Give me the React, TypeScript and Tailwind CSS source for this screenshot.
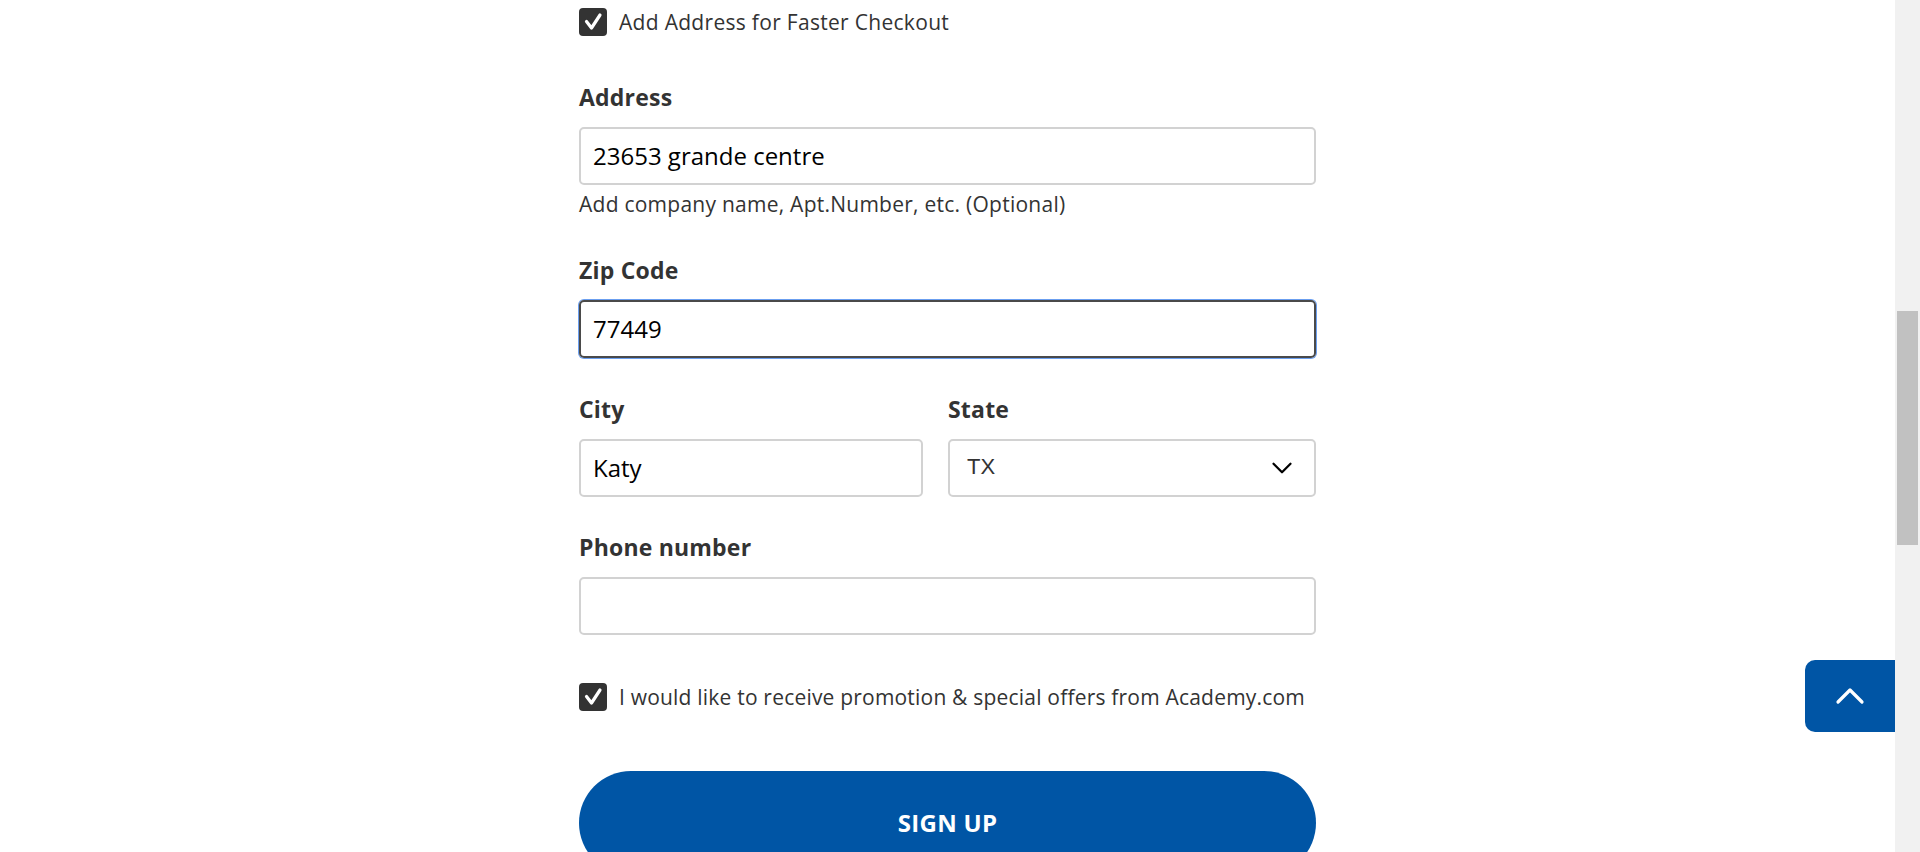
import { ChevronDown, ChevronUp } from "lucide-react";

const font = "font-['Open_Sans',_'Lato',_sans-serif]";

const CheckBox = () => (
  <span className="flex h-[28px] w-[28px] shrink-0 items-center justify-center rounded-[4px] bg-[#333]">
    <svg width="28" height="28" viewBox="0 0 28 28" fill="none">
      <path
        d="M7.5 13.5 L12.5 20 L21 7"
        stroke="white"
        strokeWidth="3.2"
        strokeLinecap="round"
        strokeLinejoin="round"
      />
    </svg>
  </span>
);

const Label = ({ text, className = "" }: { text: string; className?: string }) => (
  <div
    className={`h-[28px] text-[23px] leading-[28px] font-bold tracking-[0.2px] text-[#333] ${className}`}
  >
    {text}
  </div>
);

const TextBox = ({ value, focused = false }: { value?: string; focused?: boolean }) => (
  <div
    className={`mt-[16px] flex h-[58px] items-center rounded-[5px] border-2 px-[12px] text-[24px] text-black ${
      focused
        ? "border-[#4a4a4a] shadow-[0_0_0_1px_#6b9ff0]"
        : "border-[#d2d2d2]"
    }`}
  >
    {value}
  </div>
);

export default function App() {
  return (
    <div className={`flex h-screen w-full overflow-hidden bg-white ${font}`}>
      <main className="flex flex-1 items-start justify-center">
        <form className="block w-[737px] pt-[8px]">
          <label className="flex h-[28px] items-center gap-[12px] text-[21px] tracking-[0.3px] text-[#333]">
            <CheckBox />
            <span className="mt-[2px]">Add Address for Faster Checkout</span>
          </label>

          <Label text="Address" className="mt-[47px]" />
          <TextBox value="23653 grande centre" />
          <p className="mt-[7px] h-[24px] text-[21px] leading-[24px] tracking-[0.25px] text-[#333]">
            Add company name, Apt.Number, etc. (Optional)
          </p>

          <Label text="Zip Code" className="mt-[40px]" />
          <TextBox value="77449" focused />

          <div className="mt-[37px] grid grid-cols-[344px_1fr] gap-x-[25px]">
            <div>
              <Label text="City" />
              <TextBox value="Katy" />
            </div>
            <div>
              <Label text="State" />
              <div className="mt-[16px] flex h-[58px] items-center justify-between rounded-[5px] border-2 border-[#d2d2d2] pl-[17px] pr-[15px] font-['Liberation_Sans',_Arial,_sans-serif] text-[22px] text-[#333]">
                <span className="-mt-[3px]">TX</span>
                <ChevronDown size={34} strokeWidth={1.6} className="text-black" />
              </div>
            </div>
          </div>

          <Label text="Phone number" className="mt-[36px]" />
          <TextBox />

          <label className="mt-[48px] flex h-[28px] items-center gap-[12px] text-[21px] tracking-[0.2px] text-[#333]">
            <CheckBox />
            <span className="mt-[2px]">
              I would like to receive promotion &amp; special offers from Academy.com
            </span>
          </label>

          <button
            type="button"
            className="mt-[60px] block h-[104px] w-full rounded-full bg-[#0055a5] text-[24px] font-bold tracking-[0.3px] text-white"
          >
            SIGN UP
          </button>
        </form>
      </main>

      <aside className="flex w-[25px] flex-col bg-[#f1f1f1] pt-[311px]">
        <div className="ml-[2px] h-[234px] w-[21px] bg-[#c1c1c1]" />
      </aside>

      <button
        type="button"
        className="fixed right-[25px] top-[660px] flex h-[72px] w-[90px] items-center justify-center rounded-l-[10px] bg-[#0055a5] text-white"
      >
        <ChevronUp size={48} strokeWidth={1.6} />
      </button>
    </div>
  );
}
